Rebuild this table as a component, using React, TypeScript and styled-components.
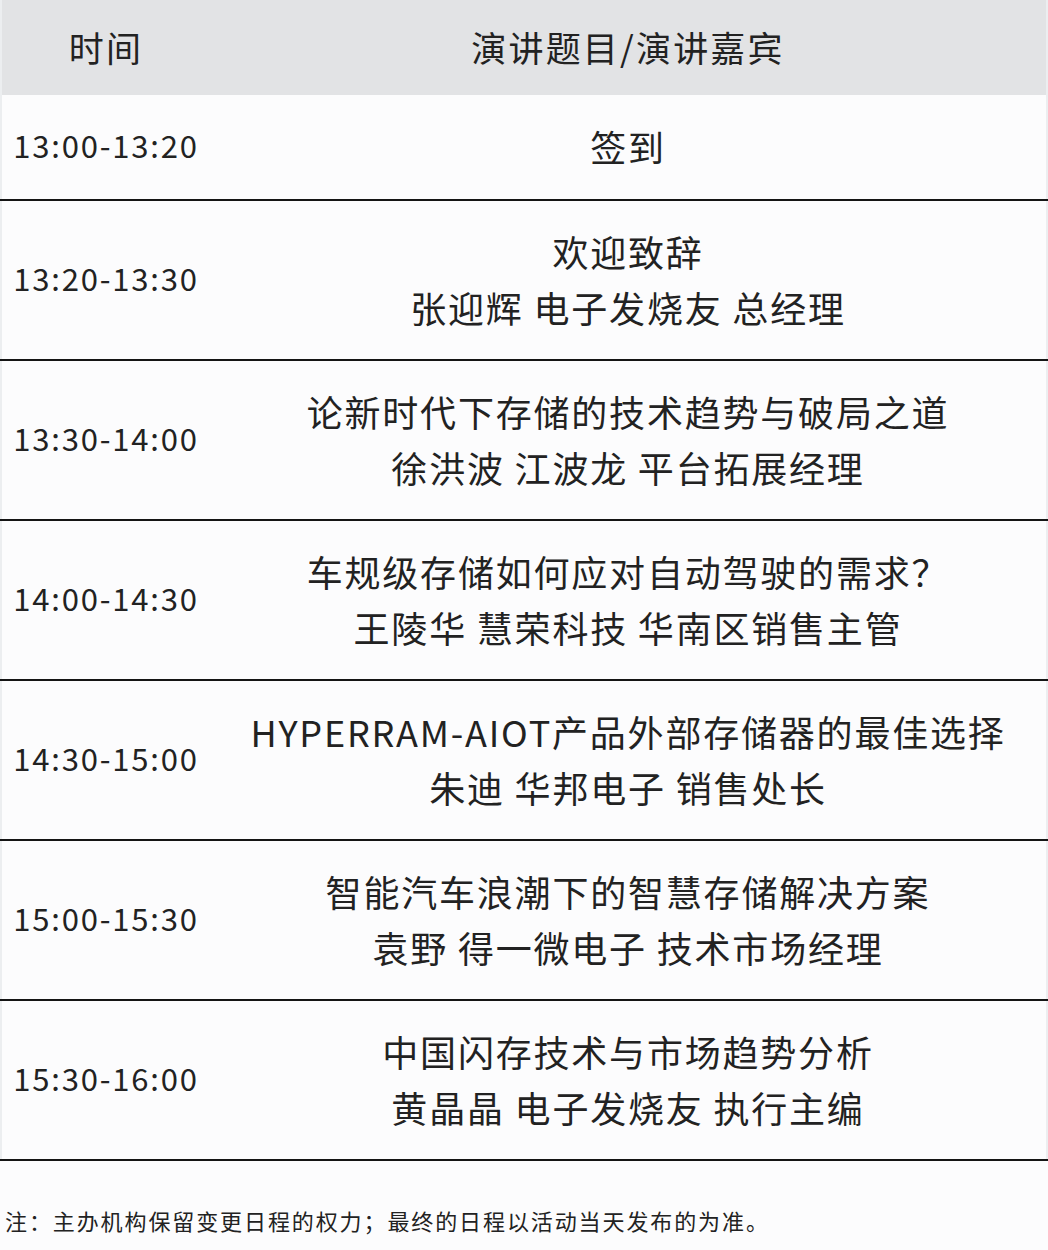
import React from "react";
import styled, { createGlobalStyle } from "styled-components";

const Global = createGlobalStyle`
  html, body { margin: 0; padding: 0; background: #fdfdfe; }
  body { font-family: "Noto Sans CJK SC", "Noto Sans", sans-serif; color: #1f1f1f; }
`;

const Page = styled.div`
  width: 1048px;
  height: 1250px;
  background: #fcfcfd;
  display: flex;
  flex-direction: column;
`;

const Table = styled.div`
  display: flex;
  flex-direction: column;
  border-left: 2px solid #eceef0;
  border-right: 2px solid #eceef0;
`;

const HeaderRow = styled.div`
  display: grid;
  grid-template-columns: 208px 1fr;
  height: 95px;
  background: #e2e3e5;
  align-items: center;
`;

const HeaderCell = styled.div`
  text-align: center;
  font-size: 35px;
  letter-spacing: 2.2px;
  color: #222;
  line-height: 1;
  padding-bottom: 2px;
`;

const Row = styled.div<{ $h: number }>`
  display: grid;
  grid-template-columns: 208px 1fr;
  height: ${(p) => p.$h}px;
  box-sizing: border-box;
  border-bottom: 2px solid #141414;
  align-items: center;
  margin: 0 -2px;
  padding: 0 2px;
`;

const TimeCell = styled.div`
  text-align: center;
  font-size: 31px;
  letter-spacing: 1.8px;
  color: #222;
  padding-bottom: 6px;
`;

const Content = styled.div`
  display: flex;
  flex-direction: column;
  align-items: center;
  text-align: center;
  font-size: 36px;
  letter-spacing: 1.8px;
  line-height: 56px;
  color: #222;
  padding-bottom: 2px;
`;

const Note = styled.div`
  margin-top: 44px;
  padding-left: 5px;
  font-size: 22px;
  letter-spacing: 1.9px;
  line-height: 30px;
  color: #222;
`;

const rows: { time: string; lines: string[] }[] = [
  { time: "13:20-13:30", lines: ["欢迎致辞", "张迎辉 电子发烧友 总经理"] },
  { time: "13:30-14:00", lines: ["论新时代下存储的技术趋势与破局之道", "徐洪波 江波龙 平台拓展经理"] },
  { time: "14:00-14:30", lines: ["车规级存储如何应对自动驾驶的需求？", "王陵华 慧荣科技 华南区销售主管"] },
  { time: "14:30-15:00", lines: ["HYPERRAM-AIOT产品外部存储器的最佳选择", "朱迪 华邦电子 销售处长"] },
  { time: "15:00-15:30", lines: ["智能汽车浪潮下的智慧存储解决方案", "袁野 得一微电子 技术市场经理"] },
  { time: "15:30-16:00", lines: ["中国闪存技术与市场趋势分析", "黄晶晶 电子发烧友 执行主编"] },
];

export default function App() {
  return (
    <Page>
      <Global />
      <Table>
        <HeaderRow>
          <HeaderCell>时间</HeaderCell>
          <HeaderCell>演讲题目/演讲嘉宾</HeaderCell>
        </HeaderRow>
        <Row $h={106}>
          <TimeCell>13:00-13:20</TimeCell>
          <Content>
            <div>签到</div>
          </Content>
        </Row>
        {rows.map((r) => (
          <Row $h={160} key={r.time}>
            <TimeCell>{r.time}</TimeCell>
            <Content>
              {r.lines.map((l) => (
                <div key={l}>{l}</div>
              ))}
            </Content>
          </Row>
        ))}
      </Table>
      <Note>注：主办机构保留变更日程的权力；最终的日程以活动当天发布的为准。</Note>
    </Page>
  );
}
